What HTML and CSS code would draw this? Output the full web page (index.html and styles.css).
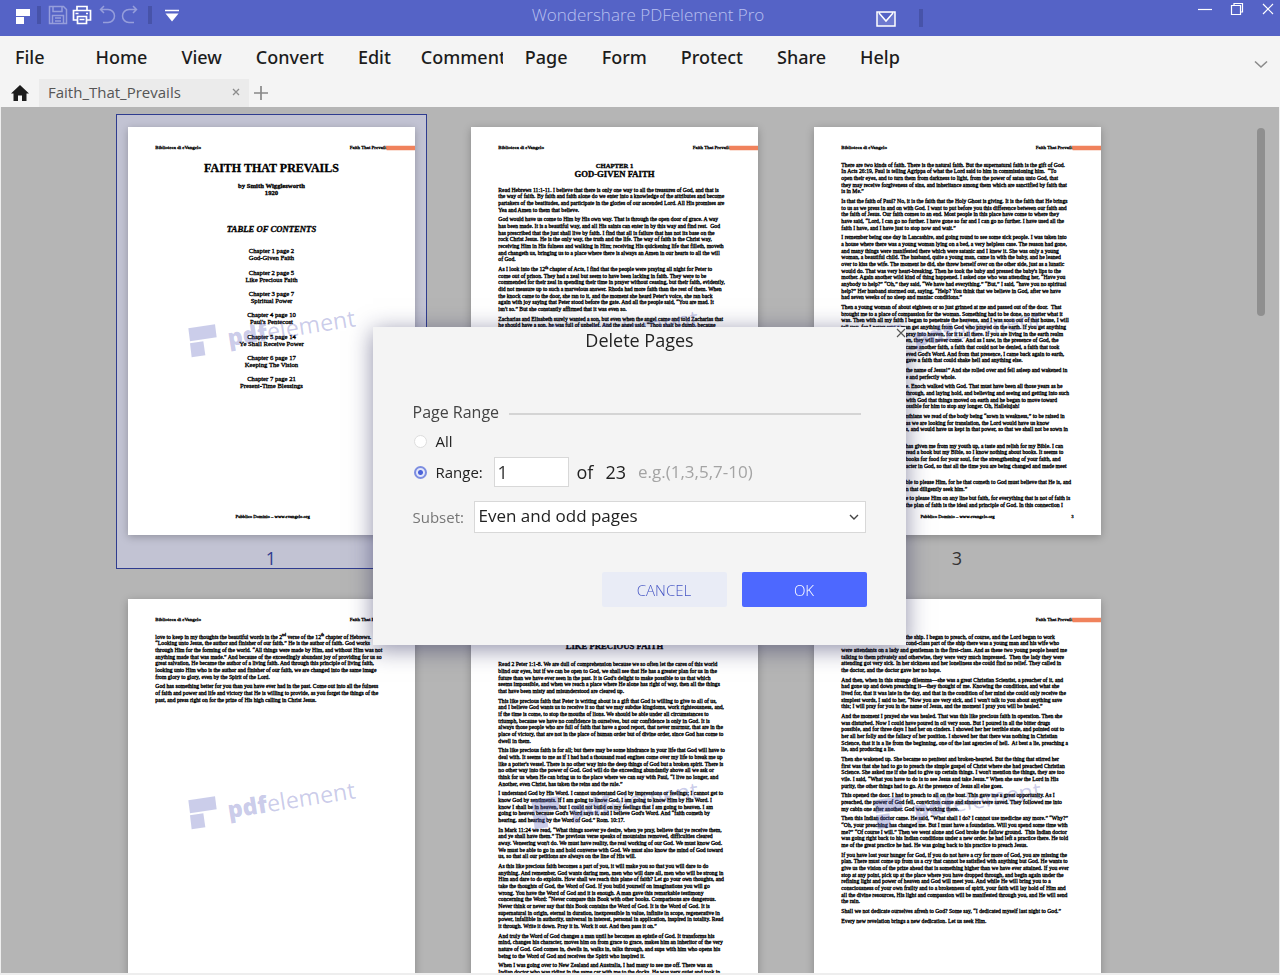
FILE: index.html
```html
<!DOCTYPE html>
<html lang="en">
<head>
<meta charset="utf-8">
<title>Wondershare PDFelement Pro</title>
<link rel="stylesheet" href="styles.css">
</head>
<body>
<header class="titlebar">
  <div class="quick">
    <svg class="logo" width="16" height="18" viewBox="0 0 16 18"><path d="M0 1h14v7H0zM0 9h8v7H0z" fill="#fff"/></svg>
    <span class="bar"></span>
    <button class="tool dim save" aria-label="Save"><svg width="20" height="20" viewBox="0 0 20 20"><path d="M1.500 1.500h14l3 3v14h-17zM5 1.500v5h9v-5M4.500 18.500v-8h11v8M7 13h6M7 16h6"/></svg></button>
    <button class="tool" aria-label="Print"><svg width="20" height="20" viewBox="0 0 20 20"><path d="M5 5.500V1.500h10v4M5 15H1.500V5.500h17V15H15M5.500 11.500h9v7h-9zM7.500 14.500h5M3.500 8.500h3M14 8.500h2" stroke-width="1.700"/></svg></button>
    <button class="tool dim undo" aria-label="Undo"><svg width="20" height="20" viewBox="0 0 20 20"><path d="M6 1L2.500 4.500 6 8M2.500 4.500H10a6.500 6.500 0 0 1 0 13H5"/></svg></button>
    <button class="tool dim redo" aria-label="Redo"><svg width="20" height="20" viewBox="0 0 20 20"><path d="M13 1l3.500 3.500L13 8M16.500 4.500H9a6.500 6.500 0 0 0 0 13h5"/></svg></button>
    <span class="bar"></span>
    <button class="tool more" aria-label="Customize"><svg width="16" height="14" viewBox="0 0 16 14"><path d="M1 1.500h14" stroke-width="1.500"/><path d="M1.500 4.500h13L8 12.500z" fill="#fff" stroke="none"/></svg></button>
  </div>
  <h1 class="apptitle">Wondershare PDFelement Pro</h1>
  <div class="window">
    <button class="tool mail" aria-label="Messages"><svg width="20" height="16" viewBox="0 0 20 16"><path d="M1 1h18v14H1zM3 2l7 8 7-8" fill="#6d79cf" stroke-width="1.500"/></svg></button>
    <span class="bar"></span>
    <div class="controls">
      <button class="tool" aria-label="Minimize"><svg width="14" height="14" viewBox="0 0 14 14"><path d="M0 7.500h14" stroke-width="1.200"/></svg></button>
      <button class="tool" aria-label="Restore"><svg width="14" height="14" viewBox="0 0 14 14"><path d="M1.500 3.500h9v9h-9zM4 3.500V1.500h8.500V10h-2" stroke-width="1.200"/></svg></button>
      <button class="tool" aria-label="Close"><svg width="12" height="12" viewBox="0 0 12 12"><path d="M1 1l10 10M11 1L1 11" stroke-width="1.200"/></svg></button>
    </div>
  </div>
</header>

<nav class="menu">
  <a class="file" href="#">File</a><a href="#">Home</a><a href="#">View</a><a href="#">Convert</a><a href="#">Edit</a><a class="comment" href="#">Comment</a><a href="#">Page</a><a href="#">Form</a><a href="#">Protect</a><a href="#">Share</a><a href="#">Help</a>
  <button class="collapse" aria-label="Collapse ribbon"><svg width="14" height="9" viewBox="0 0 14 9"><path d="M1 1.500l6 5.500 6-5.500" fill="none" stroke="#8a8a8a" stroke-width="1.600"/></svg></button>
</nav>

<div class="tabs">
  <button class="home" aria-label="Home"><svg width="18" height="16" viewBox="0 0 18 16"><path d="M9 0l9 8.500h-2.500V16H11v-5.500H7V16H2.500V8.500H0z" fill="#1c1c1c"/></svg></button>
  <div class="tab"><span>Faith_That_Prevails</span><button aria-label="Close tab"><svg width="8" height="8" viewBox="0 0 8 8"><path d="M1 1l6 6M7 1L1 7" stroke="#8c8c8c" stroke-width="1.300"/></svg></button></div>
  <button class="add" aria-label="New tab"><svg width="14" height="14" viewBox="0 0 14 14"><path d="M7 0v14M0 7h14" stroke="#888" stroke-width="1.700"/></svg></button>
</div>

<svg class="defs" aria-hidden="true"><defs>
  <g id="wm"><path d="M181 604l80-12 5 39-80 12zM186 649l40-6 6 42-41 6z"/><path d="M773 56h88v14h-85z" class="ribbon"/></g>
</defs></svg>

<main class="viewer">
  <div class="pages">
    <figure class="card selected">
      <svg class="sheet" viewBox="0 0 861 1224">
        <foreignObject width="861" height="1224"><div class="doc">
          <div class="head"><span>Biblioteca di eVangelo</span><span>Faith That Prevails</span></div>
          <div class="cover">
            <h2>FAITH THAT PREVAILS</h2>
            <p class="author">by Smith Wigglesworth<br>1920</p>
            <h3>TABLE OF CONTENTS</h3>
            <p>Chapter 1 page 2<br>God-Given Faith</p>
            <p>Chapter 2 page 5<br>Like Precious Faith</p>
            <p>Chapter 3 page 7<br>Spiritual Power</p>
            <p>Chapter 4 page 10<br>Paul's Pentecost</p>
            <p>Chapter 5 page 14<br>Ye Shall Receive Power</p>
            <p>Chapter 6 page 17<br>Keeping The Vision</p>
            <p>Chapter 7 page 21<br>Present-Time Blessings</p>
          </div>
          <div class="foot"><span></span><span>Pubblico Dominio – www.evangelo.org</span><span></span></div>
        </div></foreignObject>
        <use href="#wm" class="wm"/><text class="wm" transform="translate(303 658) rotate(-9)"><tspan class="b">pdf</tspan>element</text>
      </svg>
      <figcaption>1</figcaption>
    </figure>

    <figure class="card">
      <svg class="sheet" viewBox="0 0 861 1224">
        <foreignObject width="861" height="1224"><div class="doc">
          <div class="head"><span>Biblioteca di eVangelo</span><span>Faith That Prevails</span></div>
          <div class="chapter"><h4>CHAPTER 1</h4><h3>GOD-GIVEN FAITH</h3></div>
          <div class="text">
            <p>Read Hebrews 11:1-11. I believe that there is only one way to all the treasures of God, and that is<br>the way of faith. By faith and faith alone do we enter into a knowledge of the attributes and become<br>partakers of the beatitudes, and participate in the glories of our ascended Lord. All His promises are<br>Yea and Amen to them that believe.</p>
            <p>God would have us come to Him by His own way. That is through the open door of grace. A way<br>has been made. It is a beautiful way, and all His saints can enter in by this way and find rest.&nbsp; God<br>has prescribed that the just shall live by faith. I find that all is failure that has not its base on the<br>rock Christ Jesus. He is the only way, the truth and the life. The way of faith is the Christ way,<br>receiving Him in His fulness and walking in Him; receiving His quickening life that filleth, moveth<br>and changeth us, bringing us to a place where there is always an Amen in our hearts to all the will<br>of God.</p>
            <p>As I look into the 12<sup>th</sup> chapter of Acts, I find that the people were praying all night for Peter to<br>come out of prison. They had a zeal but seem to have been lacking in faith. They were to be<br>commended for their zeal in spending their time in prayer without ceasing, but their faith, evidently,<br>did not measure up to such a marvelous answer. Rhoda had more faith than the rest of them. When<br>the knock came to the door, she ran to it, and the moment she heard Peter's voice, she ran back<br>again with joy saying that Peter stood before the gate. And all the people said, “You are mad. It<br>isn't so.” But she constantly affirmed that it was even so.</p>
            <p>Zacharias and Elisabeth surely wanted a son, but even when the angel came and told Zacharias that<br>he should have a son, he was full of unbelief. And the angel said, “Thou shalt be dumb, because</p>
          </div>
        </div></foreignObject>
        <use href="#wm" class="wm"/><text class="wm" transform="translate(303 658) rotate(-9)"><tspan class="b">pdf</tspan>element</text>
      </svg>
      <figcaption>2</figcaption>
    </figure>

    <figure class="card">
      <svg class="sheet" viewBox="0 0 861 1224">
        <foreignObject width="861" height="1224"><div class="doc">
          <div class="head"><span>Biblioteca di eVangelo</span><span>Faith That Prevails</span></div>
          <div class="text">
            <p>There are two kinds of faith. There is the natural faith. But the supernatural faith is the gift of God.<br>In Acts 26:19, Paul is telling Agrippa of what the Lord said to him in commissioning him.&nbsp; “To<br>open their eyes, and to turn them from darkness to light, from the power of satan unto God, that<br>they may receive forgiveness of sins, and inheritance among them which are sanctified by faith that<br>is in Me.”</p>
            <p>Is that the faith of Paul? No, it is the faith that the Holy Ghost is giving. It is the faith that He brings<br>to us as we press in and on with God. I want to put before you this difference between our faith and<br>the faith of Jesus. Our faith comes to an end. Most people in this place have come to where they<br>have said, “Lord, I can go no further. I have gone so far and I can go no further. I have used all the<br>faith I have, and I have just to stop now and wait.”</p>
            <p>I remember being one day in Lancashire, and going round to see some sick people. I was taken into<br>a house where there was a young woman lying on a bed, a very helpless case. The reason had gone,<br>and many things were manifested there which were satanic and I knew it. She was only a young<br>woman, a beautiful child. The husband, quite a young man, came in with the baby, and he leaned<br>over to kiss the wife. The moment he did, she threw herself over on the other side, just as a lunatic<br>would do. That was very heart-breaking. Then he took the baby and pressed the baby's lips to the<br>mother. Again another wild kind of thing happened. I asked one who was attending her, “Have you<br>anybody to help?” “Oh,” they said, “We have had everything.” “But,” I said, “have you no spiritual<br>help?” Her husband stormed out, saying, “Help? You think that we believe in God, after we have<br>had seven weeks of no sleep and maniac conditions.”</p>
            <p class="tight">Then a young woman of about eighteen or so just grinned at me and passed out of the door.&nbsp; That<br>brought me to a place of compassion for the woman. Something had to be done, no matter what it<br>was. Then with all my faith I began to penetrate the heavens, and I was soon out of that house, I will<br>tell you, for I never saw a man get anything from God who prayed on the earth. If you get anything</p>
            <div class="right">
              <p>pray into heaven, for it is all there. If you are living in the earth realm<br>en, they will never come.&nbsp; And as I saw, in the presence of God, the<br>came another faith, a faith that could not be denied, a faith that took<br>eved God's Word. And from that presence, I came back again to earth,<br>gave a faith that could shake hell and anything else.</p>
              <p>the name of Jesus!” And she rolled over and fell asleep and wakened in<br>e and perfectly whole.</p>
              <p>e. Enoch walked with God. That must have been all those years as he<br>through, and laying hold, and believing and seeing and getting into such<br>with God that things moved on earth and he began to move toward<br>ossible for him to stop any longer. Oh, Hallelujah!</p>
              <p>nthians we read of the body being “sown in weakness,” to be raised in<br>as we are looking for translation, the Lord would have us know<br>s, and would have us kept in that power, so that we shall not be sown in<br>&nbsp;</p>
              <p>has given me from my youth up, a taste and relish for my Bible. I can<br>read a book but my Bible, so I know nothing about books. It seems to<br>books for food for your soul, for the strengthening of your faith, and<br>acter in God, so that all the time you are being changed and made meet<br>&nbsp;</p>
              <p>ble to please Him, for he that cometh to God must believe that He is, and<br>n that diligently seek him.”</p>
              <p>e to please Him on any line but faith, for everything that is not of faith is<br>the plan of faith is the ideal and principle of God. In this connection I</p>
            </div>
          </div>
          <div class="foot"><span></span><span>Pubblico Dominio – www.evangelo.org</span><span>3</span></div>
        </div></foreignObject>
        <use href="#wm" class="wm"/><text class="wm" transform="translate(303 658) rotate(-9)"><tspan class="b">pdf</tspan>element</text>
      </svg>
      <figcaption>3</figcaption>
    </figure>

    <figure class="card">
      <svg class="sheet" viewBox="0 0 861 1224">
        <foreignObject width="861" height="1224"><div class="doc">
          <div class="head"><span>Biblioteca di eVangelo</span><span>Faith That Prevails</span></div>
          <div class="text">
            <p>love to keep in my thoughts the beautiful words in the 2<sup>nd</sup> verse of the 12<sup>th</sup> chapter of Hebrews.<br>“Looking unto Jesus, the author and finisher of our faith.” He is the author of faith. God works<br>through Him for the forming of the world. “All things were made by Him, and without Him was not<br>anything made that was made.” And because of the exceedingly abundant joy of providing for us so<br>great salvation, He became the author of a living faith. And through this principle of living faith,<br>looking unto Him who is the author and finisher of our faith, we are changed into the same image<br>from glory to glory, even by the Spirit of the Lord.</p>
            <p>God has something better for you than you have ever had in the past. Come out into all the fulness<br>of faith and power and life and victory that He is willing to provide, as you forget the things of the<br>past, and press right on for the prize of His high calling in Christ Jesus.</p>
          </div>
        </div></foreignObject>
        <use href="#wm" class="wm"/><text class="wm" transform="translate(303 658) rotate(-9)"><tspan class="b">pdf</tspan>element</text>
      </svg>
    </figure>

    <figure class="card">
      <svg class="sheet" viewBox="0 0 861 1224">
        <foreignObject width="861" height="1224"><div class="doc">
          <div class="head"><span>Biblioteca di eVangelo</span><span>Faith That Prevails</span></div>
          <div class="chapter second"><h4>CHAPTER 2</h4><h3>LIKE PRECIOUS FAITH</h3></div>
          <div class="text">
            <p>Read 2 Peter 1:1-8. We are dull of comprehension because we so often let the cares of this world<br>blind our eyes, but if we can be open to God, we shall see that He has a greater plan for us in the<br>future than we have ever seen in the past. It is God's delight to make possible to us that which<br>seems impossible, and when we reach a place where He alone has right of way, then all the things<br>that have been misty and misunderstood are cleared up.</p>
            <p>This like precious faith that Peter is writing about is a gift that God is willing to give to all of us,<br>and I believe God wants us to receive it so that we may subdue kingdoms, work righteousness, and,<br>if the time is come, to stop the mouths of lions. We should be able under all circumstances to<br>triumph, because we have no confidence in ourselves, but our confidence is only in God. It is<br>always those people who are full of faith that have a good report, that never murmur, that are in the<br>place of victory, that are not in the place of human order but of divine order, since God has come to<br>dwell in them.</p>
            <p>This like precious faith is for all; but there may be some hindrance in your life that God will have to<br>deal with. It seems to me as if I had had a thousand road engines come over my life to break me up<br>like a potter's vessel. There is no other way into the deep things of God but a broken spirit. There is<br>no other way into the power of God. God will do the exceeding abundantly above all we ask or<br>think for us when He can bring us to the place where we can say with Paul, “I live no longer, and<br>Another, even Christ, has taken the reins and the rule.”</p>
            <p>I understand God by His Word. I cannot understand God by impressions or feelings; I cannot get to<br>know God by sentiments. If I am going to know God, I am going to know Him by His Word. I<br>know I shall be in heaven, but I could not build on my feelings that I am going to heaven. I am<br>going to heaven because God's Word says it, and I believe God's Word. And “faith cometh by<br>hearing, and hearing by the Word of God.” Rom. 10:17.</p>
            <p>In Mark 11:24 we read, “What things soever ye desire, when ye pray, believe that ye receive them,<br>and ye shall have them.” The previous verse speaks of mountains removed, difficulties cleared<br>away. Veneering won't do. We must have reality, the real working of our God. We must know God.<br>We must be able to go in and hold converse with God. We must also know the mind of God toward<br>us, so that all our petitions are always on the line of His will.</p>
            <p>As this like precious faith becomes a part of you, it will make you so that you will dare to do<br>anything. And remember, God wants daring men, men who will dare all, men who will be strong in<br>Him and dare to do exploits. How shall we reach this plane of faith? Let go your own thoughts, and<br>take the thoughts of God, the Word of God. If you build yourself on imaginations you will go<br>wrong. You have the Word of God and it is enough. A man gave this remarkable testimony<br>concerning the Word: “Never compare this Book with other books. Comparisons are dangerous.<br>Never think or never say that this Book contains the Word of God. It is the Word of God. It is<br>supernatural in origin, eternal in duration, inexpressible in value, infinite in scope, regenerative in<br>power, infallible in authority, universal in interest, personal in application, inspired in totality. Read<br>it through. Write it down. Pray it in. Work it out. And then pass it on.”</p>
            <p>And truly the Word of God changes a man until he becomes an epistle of God. It transforms his<br>mind, changes his character, moves him on from grace to grace, makes him an inheritor of the very<br>nature of God. God comes in, dwells in, walks in, talks through, and sups with him who opens his<br>being to the Word of God and receives the Spirit who inspired it.</p>
            <p>When I was going over to New Zealand and Australia, I had many to see me off. There was an<br>Indian doctor who was riding in the same car with me to the docks. He was very quiet and took in</p>
          </div>
        </div></foreignObject>
        <use href="#wm" class="wm"/><text class="wm" transform="translate(303 658) rotate(-9)"><tspan class="b">pdf</tspan>element</text>
      </svg>
    </figure>

    <figure class="card">
      <svg class="sheet" viewBox="0 0 861 1224">
        <foreignObject width="861" height="1224"><div class="doc">
          <div class="head"><span></span><span>Faith That Prevails</span></div>
          <div class="text">
            <p class="tight right">the ship. I began to preach, of course, and the Lord began to work<br>cond-class part of the ship there was a young man and his wife who</p>
            <p>were attendants on a lady and gentleman in the first-class. And as these two young people heard me<br>talking to them privately and otherwise, they were very much impressed.&nbsp; Then the lady they were<br>attending got very sick. In her sickness and her loneliness she could find no relief. They called in<br>the doctor, and the doctor gave her no hope.</p>
            <p>And then, when in this strange dilemma—she was a great Christian Scientist, a preacher of it, and<br>had gone up and down preaching it—they thought of me. Knowing the conditions, and what she<br>lived for, that it was late in the day, and that in the condition of her mind she could only receive the<br>simplest words, I said to her, “Now you are very sick, and I won't talk to you about anything save<br>this; I will pray for you in the name of Jesus, and the moment I pray you will be healed.”</p>
            <p>And the moment I prayed she was healed. That was this like precious faith in operation. Then she<br>was disturbed. Now I could have poured in oil very soon. But I poured in all the bitter drugs<br>possible, and for three days I had her on cinders. I showed her her terrible state, and pointed out to<br>her all her folly and the fallacy of her position. I showed her that there was nothing in Christian<br>Science, that it is a lie from the beginning, one of the last agencies of hell.&nbsp; At best a lie, preaching a<br>lie, and producing a lie.</p>
            <p>Then she wakened up. She became so penitent and broken-hearted. But the thing that stirred her<br>first was that she had to go to preach the simple gospel of Christ where she had preached Christian<br>Science. She asked me if she had to give up certain things. I won't mention the things, they are too<br>vile. I said, “What you have to do is to see Jesus and take Jesus.” When she saw the Lord in His<br>purity, the other things had to go. At the presence of Jesus all else goes.</p>
            <p>This opened the door. I had to preach to all on the boat. This gave me a great opportunity. As I<br>preached, the power of God fell, conviction came and sinners were saved. They followed me into<br>my cabin one after another. God was working there.</p>
            <p>Then this Indian doctor came. He said, “What shall I do? I cannot use medicine any more.” “Why?”<br>“Oh, your preaching has changed me. But I must have a foundation. Will you spend some time with<br>me?” “Of course I will.” Then we went alone and God broke the fallow ground.&nbsp; This Indian doctor<br>was going right back to his Indian conditions under a new order. he had left a practice there. He told<br>me of the great practice he had. He was going back to his practice to preach Jesus.</p>
            <p>If you have lost your hunger for God, if you do not have a cry for more of God, you are missing the<br>plan. There must come up from us a cry that cannot be satisfied with anything but God. He wants to<br>give us the vision of the prize ahead that is something higher than we have ever attained. If you ever<br>stop at any point, pick up at the place where you have dropped through, and begin again under the<br>refining light and power of heaven and God will meet you. And while He will bring you to a<br>consciousness of your own frailty and to a brokenness of spirit, your faith will lay hold of Him and<br>all the divine resources, His light and compassion will be manifested through you, and He will send<br>the rain.</p>
            <p>Shall we not dedicate ourselves afresh to God? Some say, “I dedicated myself last night to God.”</p>
            <p>Every new revelation brings a new dedication. Let us seek Him.</p>
          </div>
        </div></foreignObject>
        <use href="#wm" class="wm"/><text class="wm" transform="translate(303 658) rotate(-9)"><tspan class="b">pdf</tspan>element</text>
      </svg>
    </figure>
  </div>
  <div class="scroll"><span></span></div>
</main>

<div class="overlay">
  <form class="dialog" role="dialog" aria-labelledby="dlg-title">
    <button type="button" class="close" aria-label="Close dialog"><svg width="10" height="10" viewBox="0 0 10 10"><path d="M1 1l8 8M9 1L1 9" stroke="#555" stroke-width="1.100"/></svg></button>
    <h2 id="dlg-title">Delete Pages</h2>
    <div class="section"><span>Page Range</span><hr></div>
    <div class="row all"><input type="radio" name="scope" id="all"><label for="all">All</label></div>
    <div class="row range"><input type="radio" name="scope" id="range" checked><label for="range">Range:</label><input type="text" class="box" value="1" aria-label="Page range"><span>of</span><span class="total">23</span><span class="hint">e.g.(1,3,5,7-10)</span></div>
    <div class="row subset"><label for="subset">Subset:</label>
      <div class="select"><select id="subset"><option>Even and odd pages</option></select><svg width="10" height="6" viewBox="0 0 10 6"><path d="M1 1l4 4 4-4" fill="none" stroke="#444" stroke-width="1.400"/></svg></div></div>
    <div class="actions"><button type="button" class="cancel">CANCEL</button><button type="button" class="ok">OK</button></div>
  </form>
</div>
</body>
</html>
```
FILE: styles.css
```css
* { box-sizing: border-box; }
body { margin: 0; height: 100vh; display: flex; flex-direction: column; overflow: hidden; background: #f4f4f4; color: #222; font-family: "Open Sans", "Noto Sans", sans-serif; }
h1, h2, h3, h4, p, figure { margin: 0; font-weight: inherit; }
button { border: 0; padding: 0; background: none; font-family: inherit; }
svg { display: block; }
.defs { position: absolute; width: 0; height: 0; }

.titlebar { display: grid; grid-template-columns: 1fr auto 1fr; height: 36px; flex: none; padding-left: 16px; background: #5563c6; }
.quick, .window { display: flex; align-items: center; }
.quick { padding-bottom: 6px; }
.tool svg { fill: none; stroke: #fff; stroke-width: 1.5px; }
.tool.dim { opacity: .38; }
.logo { margin-top: 4px; }
.bar { width: 4px; height: 18px; background: #4753a9; }
.quick .bar { margin-left: 5px; }
.save { margin-left: 7px; }
.save + .tool { margin-left: 4px; }
.undo { margin-left: 6px; }
.redo { margin-left: 2px; }
.quick .redo + .bar { margin-left: 8px; }
.more { margin: 2px 0 0 12px; }
.apptitle { font-size: 17px; line-height: 30px; color: #b9c0f0; font-weight: 300; }
.mail { margin-left: 112px; padding-top: 2px; }
.window > .bar { margin-left: 23px; }
.controls { display: flex; align-self: flex-start; align-items: center; gap: 18px; margin-left: auto; padding: 2px 6px 0 0; }

.menu { display: flex; align-items: center; gap: 34px; height: 43px; flex: none; padding: 0 0 2px 15px; font-family: "Noto Sans", "Open Sans", sans-serif; font-size: 18px; font-weight: 500; }
.menu a { color: #1c1c1c; text-decoration: none; }
.file { margin-right: 17px; }
.comment { width: 82px; overflow: hidden; margin: 0 -12px 0 -4px; }
.collapse { margin: 16px 12px 0 auto; }

.tabs { display: flex; align-items: center; height: 28px; flex: none; padding-left: 11px; }
.tabs svg { margin-bottom: 1px; }
.tab { display: flex; justify-content: space-between; align-items: center; width: 210px; height: 28px; margin-left: 10px; padding: 0 9px 2px; background: #ebebeb; color: #555; font-size: 15px; }
.add { margin-left: 5px; }

.viewer { position: relative; flex: 1; min-height: 0; overflow: hidden; border: solid #eee; border-width: 0 1px 2px; background: #b5b5b5; }
.pages { display: grid; grid-template-columns: repeat(3, 311px); column-gap: 32px; row-gap: 17px; justify-content: center; padding: 7px 52px 0 0; }
.card { height: 455px; padding: 12px 11px; border: 1px solid transparent; }
.selected { background: #c2c3d3; border-color: #2f3c8f; }
.sheet { width: 100%; height: auto; background: #fff; box-shadow: 0 2px 8px rgba(0, 0, 0, .25); overflow: hidden; }
figcaption { padding-top: 11px; text-align: center; font-size: 18px; line-height: 24px; color: #333; }
.selected figcaption { color: #2f3c8f; }
.scroll { position: absolute; top: 21px; right: 14px; width: 8px; }
.scroll span { display: block; height: 188px; border-radius: 4px; background: #8f8f8f; }

.doc { display: flex; flex-direction: column; height: 1224px; padding: 50px 82px 46px; overflow: hidden; white-space: nowrap; font-family: "Liberation Serif", serif; font-size: 17px; line-height: 20px; color: #000; -webkit-text-stroke: 1px #000; }
.head, .foot { display: flex; justify-content: space-between; font-size: 15px; }
.foot { margin-top: auto; font-size: 14px; }
.foot span:first-child { width: 7px; }
.text { margin-top: 34px; }
.text p { margin-bottom: 9px; }
.text .tight { margin-bottom: 0; }
.right { padding-left: 193px; }
sup { font-size: 12px; line-height: 0; }
.chapter { margin-top: 33px; text-align: center; line-height: 26px; font-weight: bold; }
.chapter h4 { font-size: 20px; }
.chapter h3 { font-size: 26px; }
.chapter + .text { margin-top: 24px; }
.second + .text { margin-top: 32px; }
.cover { margin-top: 33px; text-align: center; font-size: 20px; line-height: 21px; }
.cover h2 { font-size: 36px; line-height: 40px; font-weight: bold; }
.cover p { margin-bottom: 22px; }
.cover .author { margin: 23px 0 86px; font-weight: bold; }
.cover h3 { margin-bottom: 42px; font-size: 26px; line-height: 26px; font-weight: bold; font-style: italic; }
.wm { fill: #5c62bd; fill-opacity: .32; font-family: "Open Sans", sans-serif; font-size: 70px; font-weight: 400; }
.wm .b { font-weight: 800; }
.ribbon { fill: #f0825c; fill-opacity: 1; }

.overlay { position: fixed; inset: 0; display: flex; align-items: center; justify-content: center; padding: 0 2px 3px 0; }
.dialog { position: relative; width: 533px; padding: 0 39px 38px 40px; background: #f4f4f4; box-shadow: 0 4px 22px rgba(30, 30, 80, .5); font-size: 15px; line-height: 24px; }
.dialog h2 { font-size: 18px; line-height: 26px; text-align: center; }
.close { position: absolute; top: 1px; right: 0; }
.section { display: flex; align-items: center; gap: 10px; margin-top: 47px; font-size: 16px; color: #444; }
.section hr { flex: 1; margin: 4px 6px 0 0; border: 0; border-top: 2px solid #d4d4d4; }
.row { display: flex; align-items: center; }
.row input[type="radio"] { appearance: none; width: 13px; height: 13px; margin: 0 9px 0 1px; border: 1px solid #ddd; border-radius: 50%; background: #fff; }
.row input[type="radio"]:checked { border: 2px solid #7c8de0; background: radial-gradient(circle, #4a62d8 2px, #e3e7fa 3px); }
.all { margin-top: 5px; }
.range { margin-top: 4px; font-size: 18px; }
.range label { width: 58px; font-size: 15px; }
.box { width: 75px; height: 30px; margin-right: 8px; padding: 0 3px; border: 1px solid #d8d8d8; background: #fff; color: #333; font: inherit; }
.total { margin: 0 12px; }
.hint { font-size: 17px; color: #a4a4a4; }
.subset { margin-top: 14px; color: #777; }
.subset label { width: 61px; }
.select { position: relative; flex: 1; margin-right: 1px; }
.select select { appearance: none; width: 100%; height: 32px; padding: 0 4px 2px; border: 1px solid #d8d8d8; background: #fff; color: #222; font: 17px/24px "Open Sans", sans-serif; }
.select svg { position: absolute; right: 7px; top: 13px; pointer-events: none; }
.actions { display: flex; justify-content: flex-end; gap: 15px; margin-top: 39px; }
.actions button { width: 125px; height: 35px; border-radius: 2px; font-size: 15px; background: #e9ecf6; color: #4656c4; font-weight: 300; }
.actions .ok { background: #4d68ff; color: #fff; }
```
